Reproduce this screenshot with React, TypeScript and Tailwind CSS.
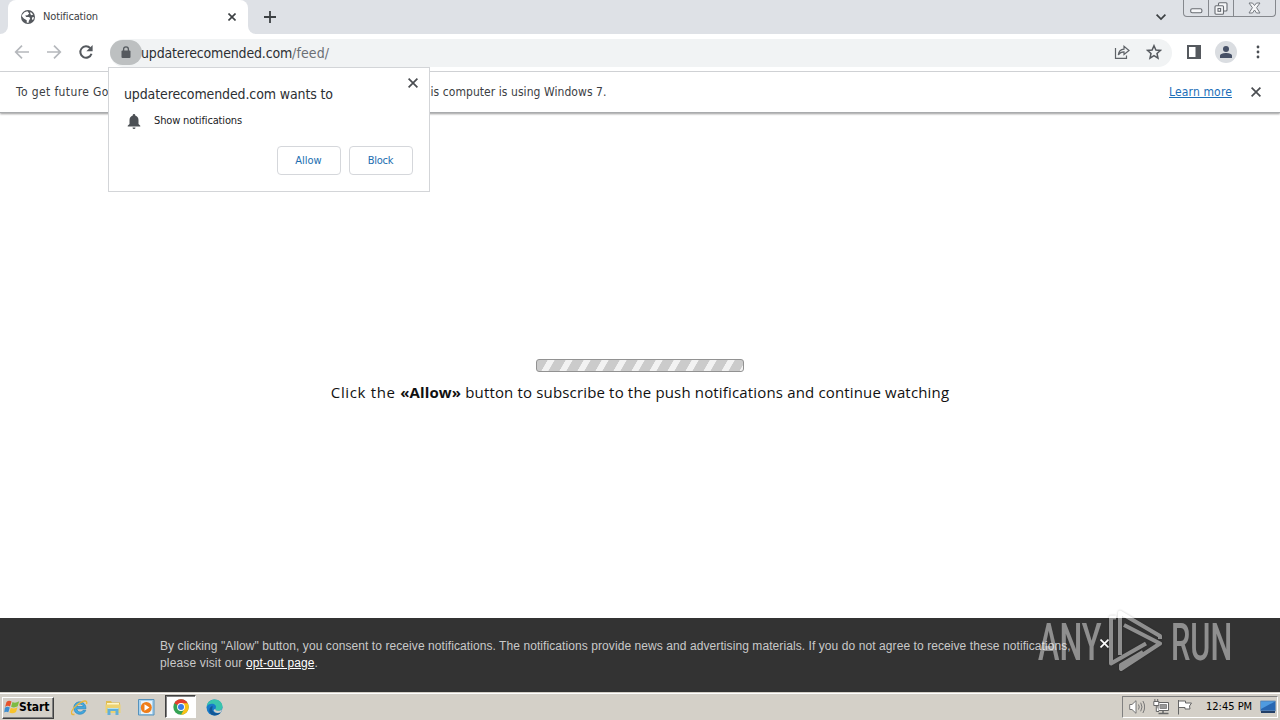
const ui = "font-['DejaVu_Sans_Condensed','DejaVu_Sans',sans-serif]";

function Close({ size = 10, stroke = "#4a4d51", w = 1.7 }: { size?: number; stroke?: string; w?: number }) {
  return (
    <svg width={size} height={size} viewBox="0 0 10 10" fill="none" stroke={stroke} strokeWidth={w} className="shrink-0">
      <path d="M.6.6l8.800 8.800M9.400.6L.6 9.400" />
    </svg>
  );
}

function TabStrip() {
  return (
    <div className="flex h-[34px] bg-[#dee1e6]">
      <div className="flex w-2 items-end bg-white">
        <div className="h-full w-2 rounded-br-lg bg-[#dee1e6]" />
      </div>
      <div className="w-60 bg-[#dee1e6]">
        <div className="flex h-full items-center rounded-t-lg bg-white pl-3 pr-3">
          <svg width="16" height="16" viewBox="0 0 16 16" className="shrink-0">
            <circle cx="8" cy="8" r="7" fill="#55595e" />
            <path d="M7.4 2.3l1.800 2.200-1.600 1.700-2.400.3 1 1.500h3l1 1.500-1.300 2.300-.5 2.200-1.700-.6V11.200L3.800 9.600 1.900 7.300l.3-1.500L4.500 3.300z" fill="#fff" />
            <path d="M10.500 2.800l2.700 2.600-1.700.8-1.200-1.300zM12 8.500l2-.5-.6 2.400-1.400.4z" fill="#fff" />
          </svg>
          <span className={`${ui} ml-[7px] pt-px text-[11px] tracking-[-0.15px] text-[#3c4043]`}>Notification</span>
          <span className="ml-auto"><Close size={8} stroke="#3c4043" w={2} /></span>
        </div>
      </div>
      <div className="flex w-2 items-end bg-white">
        <div className="h-full w-2 rounded-bl-lg bg-[#dee1e6]" />
      </div>
      <svg width="12" height="12" viewBox="0 0 12 12" className="ml-2 mt-[11px]">
        <path d="M6 0v12M0 6h12" stroke="#3c4043" strokeWidth="1.800" />
      </svg>
      <svg width="12" height="8" viewBox="0 0 12 8" className="ml-auto mt-[13px]" fill="none">
        <path d="M1.600 1.600L6 6l4.400-4.400" stroke="#3c4043" strokeWidth="1.700" />
      </svg>
      <div className="ml-4 mr-1 flex h-[17px] w-[93px] rounded-b-[4px] border border-t-0 border-[#85888d]">
        <div className="flex w-[25px] justify-center border-r border-[#85888d] pt-2">
          <svg width="13" height="6" viewBox="0 0 13 6"><rect x=".7" y=".7" width="11.200" height="4" rx="1.5" fill="#f5f6f8" stroke="#686c72" strokeWidth="1.1" /></svg>
        </div>
        <div className="flex w-[25px] justify-center border-r border-[#85888d] pt-[2px]">
          <svg width="14" height="13" viewBox="0 0 14 13" fill="#f5f6f8" stroke="#686c72" strokeWidth="1.1">
            <rect x="4.500" y=".7" width="8.500" height="8.300" rx="1" />
            <rect x="1" y="3.700" width="8.500" height="8.500" rx="1" />
            <rect x="4" y="6.500" width="2.600" height="2.800" />
          </svg>
        </div>
        <div className="flex flex-1 justify-center pt-[2px]">
          <svg width="13" height="12" viewBox="0 0 13 12" fill="#f5f6f8" stroke="#777b81" strokeWidth="1">
            <path d="M1 1h3.500l2 2.500L8.500 1H12L8.600 5.700 12 11H8.500l-2-3-2 3H1l3.400-5.300z" />
          </svg>
        </div>
      </div>
    </div>
  );
}

function Toolbar() {
  return (
    <div className="flex h-[38px] items-center border-b border-[#d5d7da] bg-white">
      <svg width="16" height="16" viewBox="0 0 16 16" className="ml-[14px] -mt-px" fill="none" stroke="#b5b8bc" strokeWidth="1.700"><path d="M15 8H2.500M8 1.700L1.700 8 8 14.300" /></svg>
      <svg width="16" height="16" viewBox="0 0 16 16" className="ml-4 -mt-px" fill="none" stroke="#b5b8bc" strokeWidth="1.700"><path d="M1 8h12.500M8 1.700L14.300 8 8 14.300" /></svg>
      <svg width="16" height="16" viewBox="0 0 16 16" className="ml-4 -mt-px"><path d="M12.300 4.200A5.700 5.700 0 1 0 13.500 9.700" fill="none" stroke="#55595e" strokeWidth="2" /><path d="M14.600 1v6.200H8.400z" fill="#55595e" /></svg>
      <div className="ml-4 flex h-7 w-[1062px] items-center rounded-full bg-[#f1f3f4]">
        <div className="flex h-[25px] w-8 items-center justify-center rounded-full bg-[#bdc0c1]">
          <svg width="10" height="13" viewBox="0 0 10 13" className="-mt-px"><rect x="0.500" y="4.500" width="9" height="7.500" rx="1" fill="#55595e" /><path d="M2.600 5V3.200a2.400 2.400 0 0 1 4.800 0V5" fill="none" stroke="#55595e" strokeWidth="1.300" /></svg>
        </div>
        <div className={`${ui} -ml-px text-[14px] leading-5 text-[#2c2f33]`}>
          <span className="tracking-[-0.16px]">updaterecomended.com</span><span className="tracking-[0.1px] text-[#6b6f74]">/feed/</span>
        </div>
        <svg width="16" height="16" viewBox="0 0 16 16" className="-mt-px ml-auto" fill="none" stroke="#5f6368" strokeWidth="1.2"><path d="M1.500 4v10.400h11V11.500" /><path d="M4.300 11c.4-3.600 2.400-5.600 5.700-5.900V2.300L15 6.500l-5 4V7.900c-2.600 0-4.300.9-5.700 3.100z" /></svg>
        <svg width="16" height="16" viewBox="0 0 16 16" className="-mt-px ml-4 mr-[10px]" fill="none" stroke="#55595e" strokeWidth="1.500"><path d="M8 1.700l1.900 4.300 4.600.4-3.500 3.100 1 4.600L8 11.700l-4 2.400 1-4.600-3.500-3.100 4.600-.4z" /></svg>
      </div>
      <svg width="14" height="14" viewBox="0 0 14 14" className="-mt-px ml-[15px]"><path d="M0 0h14v14H0z" fill="#55595e" /><path d="M2 2h6.500v10H2z" fill="#fff" /></svg>
      <div className="-mt-px ml-[14px] flex size-[22px] items-center justify-center rounded-full bg-[#dadde1]">
        <svg width="12" height="12" viewBox="0 0 12 12" fill="#465066"><circle cx="6" cy="3" r="3" /><path d="M0 12V9.800C0 7.800 3.500 7 6 7s6 .8 6 2.800V12z" /></svg>
      </div>
      <svg width="4" height="14" viewBox="0 0 4 14" className="-mt-px ml-[19px]" fill="#4a4e53"><circle cx="2" cy="2" r="1.400" /><circle cx="2" cy="7" r="1.400" /><circle cx="2" cy="12" r="1.400" /></svg>
    </div>
  );
}

function InfoBar() {
  return (
    <div className={`${ui} relative flex h-[41px] items-center border-b border-[#a9abad] bg-white pl-4 pr-[19px] text-[12px] text-[#3c4043] shadow-[0_1px_2px_rgba(0,0,0,0.4)]`}>
      <span className="whitespace-nowrap">
        <span className="tracking-[0.38px]">To get future Go</span>
        <span className="tracking-[0.16px]">ogle Chrome updates, you'll need Windows 10 or later. Th</span>
        <span className="tracking-[0.06px]">is computer is using Windows 7.</span>
      </span>
      <a className="ml-auto mr-[19px] tracking-[0.15px] text-[#1b6eb8] underline underline-offset-1">Learn more</a>
      <Close />
    </div>
  );
}

function PermissionPopup() {
  return (
    <div className={`${ui} absolute left-[108px] top-[67px] h-[125px] w-[322px] border border-[#d3d5d8] bg-white pl-[15px] pr-4`}>
      <div className="flex justify-between">
        <div className="mt-4 text-[14px] leading-5 tracking-[-0.12px] text-[#2c2f33]">updaterecomended.com wants to</div>
        <div className="-mr-[5px] mt-[10px] w-[15px] pl-[5px]"><Close /></div>
      </div>
      <div className="mt-2 flex h-4 items-center pl-[3px]">
        <svg width="14" height="15" viewBox="0 0 14 15" fill="#4c5055" className="mt-[2px]"><path d="M7 0a1.200 1.200 0 0 1 1.200 1.400C10.400 2 11.500 3.800 11.500 6v4l1.800 1.700v.9H.7v-.9L2.500 10V6c0-2.200 1.100-4 3.300-4.600A1.200 1.200 0 0 1 7 0zM5.500 13.400h3a1.500 1.500 0 0 1-3 0z" /></svg>
        <span className="ml-[13px] pt-[2px] text-[11px] tracking-[-0.15px] text-[#202124]">Show notifications</span>
      </div>
      <div className="mt-[18px] flex justify-end gap-2 text-[11px] text-[#1b6eb0]">
        <button className="h-[29px] w-16 rounded-[4px] border border-[#d5d7db] pr-px pt-[2px]">Allow</button>
        <button className="h-[29px] w-16 rounded-[4px] border border-[#d5d7db] pr-px pt-[2px] tracking-[-0.3px]">Block</button>
      </div>
    </div>
  );
}

function Page() {
  return (
    <div className="flex flex-1 flex-col items-center bg-white pt-[246px]">
      <div className="h-[13px] w-[208px] overflow-hidden rounded-[3px] border border-[#929292] bg-[repeating-linear-gradient(120deg,#cbcbcb_0px,#cbcbcb_9px,#f2f2f2_9.500px,#f2f2f2_15px,#cbcbcb_15.600px)]" />
      <p className="mt-[9px] whitespace-nowrap font-['Open_Sans',sans-serif] text-[15px] leading-[22px] text-[#111]">
        <span className="tracking-[0.65px]">Click the </span>
        <b className="tracking-[0.13px]">«Allow»</b>
        <span className="tracking-[0.16px]"> button to subscribe to the push notifications and continue watching</span>
      </p>
    </div>
  );
}

function ConsentBar() {
  return (
    <div className="flex h-[74px] bg-[#333] pl-40 pt-5">
      <p className="w-[912px] whitespace-nowrap font-['Liberation_Sans',sans-serif] text-[12px] leading-[17px] text-[#c9c9c9]">
        <span className="tracking-[0.08px]">By clicking "Allow" button, you consent to receive notifications. The notifications provide news and advertising materials. If you do not agree to receive these notifications,</span>
        <br />
        <span className="tracking-[0.15px]">please visit our </span><a className="tracking-[0.1px] text-white underline underline-offset-1">opt-out page</a>.
      </p>
      <div className="ml-7 mt-px"><Close size={9} stroke="#fff" w={1.800} /></div>
    </div>
  );
}

function Watermark() {
  return (
    <div className="pointer-events-none absolute left-[1038px] top-[608px] flex h-16 w-[194px] items-center justify-between font-['Roboto',sans-serif] text-[52px] font-medium text-white opacity-45">
      <span className="w-16 pt-[5px]"><span className="inline-block origin-left scale-x-[0.62]">ANY</span></span>
      <svg width="56" height="62" viewBox="0 0 56 62" className="ml-[3px] mt-[2px] mr-[5px] shrink-0 overflow-visible drop-shadow-[0_0_1px_rgba(0,0,0,0.5)]" fill="none" stroke="#fff" strokeWidth="4" strokeLinejoin="round">
        <path d="M8 7.500H3v46l35-20" />
        <path d="M12 45V2.500l40 23.500v3" />
        <path d="M16 15l36 18.500-39 25.500v-4l22-13" />
      </svg>
      <span className="w-[61px] pt-[5px]"><span className="inline-block origin-left scale-x-[0.59]">RUN</span></span>
    </div>
  );
}

function Taskbar() {
  return (
    <div className="flex h-7 items-center border-t border-[#d4d0c8] bg-[#d4d0c8] shadow-[inset_0_1px_0_#fff]">
      <div className={`${ui} ml-[2px] mt-[2px] flex h-[22px] w-[52px] items-center border border-b-[#404040] border-l-white border-r-[#404040] border-t-white pl-[2px] text-[12px] font-bold tracking-[-0.1px] text-black shadow-[inset_-1px_-1px_0_#808080]`}>
        <svg width="16" height="16" viewBox="0 0 16 16" className="-ml-px -mt-px shrink-0">
          <path d="M2.500 3C4 1.500 6 1.500 7.500 2.600L6 7.500C4.500 6.500 2.600 6.600 1.100 7.900z" fill="#e6532b" />
          <path d="M8.500 3c1.800 1 4 .9 6.700-.7l-1.500 5C11.500 8.700 9 8.800 7.100 7.700z" fill="#7dbb42" />
          <path d="M.9 8.800C2.300 7.500 4.300 7.500 5.800 8.500l-1.500 4.800C2.900 12.400 1.200 12.400.2 13.400z" fill="#3e8ed0" />
          <path d="M6.800 8.800c1.800 1 4 .9 6.700-.6l-1.500 4.900c-2.300 1.500-4.800 1.600-6.600.5z" fill="#f8c32c" />
        </svg>
        <span className="-ml-px -mt-px">Start</span>
      </div>
      <div className="ml-[17px] mt-px flex items-center">
        <svg width="17" height="17" viewBox="0 0 17 17" fill="none">
          <path d="M15 9.800H5.800c.3 3.600 5 4 6.300 1.500h2.700c-2.200 6-12 5.300-12-2.500C2.800.9 15 .5 15 9.800zM5.900 7.500h6.300c-.6-3.200-5.700-3.200-6.300 0z" fill="#42a8de" stroke="#237fb8" strokeWidth=".6" />
          <path d="M3.500 15.500C-.8 16-1 12 5.500 6.500S17 .5 15.500 5" stroke="#ecb83c" strokeWidth="1.400" />
        </svg>
        <svg width="18" height="17" viewBox="0 0 18 17" className="ml-4">
          <path d="M2 2h5l1 1.500h8V8H2z" fill="#e0bd50" /><path d="M3 4h12v4H3z" fill="#fff6c8" /><path d="M1.500 5.500h15V14h-15z" fill="#edd271" /><path d="M3.500 9h11v7h-3v-4h-5v4h-3z" fill="#62afd8" /><path d="M3.500 9h11v1h-11z" fill="#b2e1f4" />
        </svg>
        <svg width="17" height="17" viewBox="0 0 17 17" className="ml-4">
          <path d="M.5.500h15.500v15.500H.5z" fill="#a9d2ee" stroke="#5592bc" /><path d="M3 2h11v13H3z" fill="#e7f3fa" /><circle cx="8.300" cy="8.500" r="5.500" fill="#ef7d18" /><path d="M6.500 5.300l5 3.200-5 3.200z" fill="#fff" />
        </svg>
      </div>
      <div className="ml-[10px] flex h-[23px] w-[31px] items-center justify-center border border-b-white border-l-[#404040] border-r-white border-t-[#404040] bg-white shadow-[inset_1px_1px_0_#808080]">
        <svg width="16" height="16" viewBox="0 0 16 16">
          <circle cx="8" cy="8" r="7.700" fill="#35a354" />
          <path d="M8 8L1.300 4.200A7.700 7.700 0 0 1 14.700 4.200z" fill="#e33e2f" />
          <path d="M8 8V4.200h6.700A7.700 7.700 0 0 1 8 15.700L11.300 9.900z" fill="#fbc116" />
          <circle cx="8" cy="8" r="3.900" fill="#fff" /><circle cx="8" cy="8" r="3" fill="#397de8" />
        </svg>
      </div>
      <svg width="17" height="17" viewBox="0 0 17 17" className="ml-[10px] mt-px">
        <circle cx="8.500" cy="8.500" r="8" fill="#187bc9" />
        <path d="M.7 7.500C1.500 2.500 5 .5 8.500.5c5 0 8 3.500 8 7 0 3-2 4.300-4.500 4.300-2.300 0-3-1-2.500-2 1.600-3-.8-5-3.700-5C3.300 4.800 1.500 6 .7 7.500z" fill="#39c4ad" />
        <path d="M6.500 8.500c-1.500 4 2.500 7 8.300 5-3 4-9.800 4-11.300-.5C2.800 10 4.300 7.500 6.500 6.800z" fill="#125795" />
        <path d="M9.500 9.800c-.5 1 .2 2 2.500 2 1.500 0 3-.4 4-1.600-.2 1.500-.7 2.500-1.600 3.400-3.500 1-6.300 0-6.900-2.600z" fill="#d4d0c8" />
      </svg>
      <div className={`${ui} ml-auto mr-[2px] mt-px flex h-[22px] w-[156px] items-center border border-b-white border-l-[#808080] border-r-white border-t-[#808080] pl-[6px] text-[11px] text-black`}>
        <svg width="16" height="16" viewBox="0 0 16 16" className="shrink-0" stroke="#777" fill="none"><path d="M.7 5.500H3L7 1.700v12.600L3 10.500H.7z" fill="#fff" /><path d="M9.500 5.500q1.500 2.500 0 5M11.700 3.700q2.600 4.300 0 8.600M13.900 2q3.500 6 0 12" /></svg>
        <svg width="17" height="16" viewBox="0 0 17 16" className="ml-2 shrink-0" stroke="#666"><path d="M5 3.500h10.500v8H5z" fill="#fff" /><path d="M7 5.500h6.500v4H7z" fill="#999" stroke="#888" /><path d="M10 11.500v2.500M5.500 14.500h10" fill="none" strokeWidth="1.500" /><path d="M.8 2.500h5v4h-5zM3.300 6.500v6H6M1.900 0v2.500M4.700 0v2.500" fill="#fff" /></svg>
        <svg width="16" height="16" viewBox="0 0 16 16" className="ml-[7px] shrink-0"><path d="M1.500 1v14.500M1.500 2h7v2h6l-2 3 .5 3H8V8.500H1.500" fill="#fff" stroke="#666" /></svg>
        <span className="ml-[13px] whitespace-nowrap pt-px">12:45 PM</span>
        <svg width="16" height="14" viewBox="0 0 16 14" className="ml-2 shrink-0"><path d="M.5 1h15v10H.5z" fill="#2867b2" stroke="#7795b5" /><path d="M1 1.500h14L1 9z" fill="#4f9be0" /><path d="M1 11h14v2H1z" fill="#233f67" /></svg>
      </div>
    </div>
  );
}

export default function App() {
  return (
    <div className="relative flex h-[720px] w-[1280px] flex-col overflow-hidden bg-white">
      <TabStrip />
      <Toolbar />
      <InfoBar />
      <Page />
      <ConsentBar />
      <Taskbar />
      <PermissionPopup />
      <Watermark />
    </div>
  );
}
